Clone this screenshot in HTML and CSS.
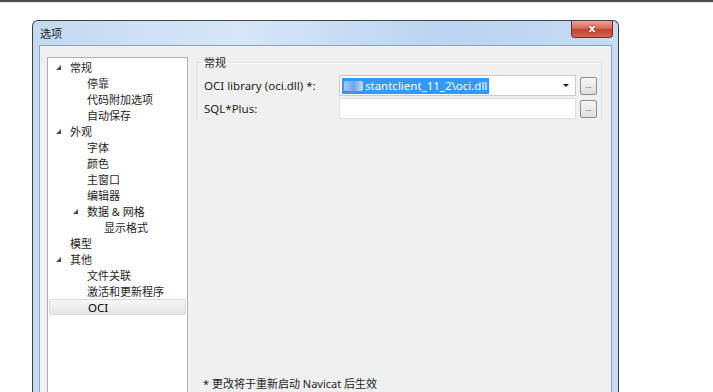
FILE: index.html
```html
<!DOCTYPE html>
<html lang="zh-CN">
<head>
    <meta charset="UTF-8">
    <meta name="viewport" content="width=device-width, initial-scale=1.0">
    <title>选项</title>
    <link rel="stylesheet" href="styles.css">
</head>
<body>

    <div class="topbar"></div>

    <div class="window">
        <!-- Title bar -->
        <div class="titlebar">
            <span class="title">选项</span>
            <button class="close">x</button>
        </div>

        <div class="client">
            <!-- Category tree -->
            <ul class="tree">
                <li class="node lvl0"><span class="twisty open"></span>常规</li>
                <li class="node lvl1"><span class="twisty"></span>停靠</li>
                <li class="node lvl1"><span class="twisty"></span>代码附加选项</li>
                <li class="node lvl1"><span class="twisty"></span>自动保存</li>
                <li class="node lvl0"><span class="twisty open"></span>外观</li>
                <li class="node lvl1"><span class="twisty"></span>字体</li>
                <li class="node lvl1"><span class="twisty"></span>颜色</li>
                <li class="node lvl1"><span class="twisty"></span>主窗口</li>
                <li class="node lvl1"><span class="twisty"></span>编辑器</li>
                <li class="node lvl1"><span class="twisty open"></span>数据 &amp; 网格</li>
                <li class="node lvl2"><span class="twisty"></span>显示格式</li>
                <li class="node lvl0"><span class="twisty"></span>模型</li>
                <li class="node lvl0"><span class="twisty open"></span>其他</li>
                <li class="node lvl1"><span class="twisty"></span>文件关联</li>
                <li class="node lvl1"><span class="twisty"></span>激活和更新程序</li>
                <li class="node lvl1 selected"><span class="twisty"></span>OCI</li>
            </ul>

            <!-- Settings page -->
            <div class="page">
                <fieldset class="group">
                    <legend>常规</legend>
                    <div class="field-row">
                        <label>OCI library (oci.dll) *:</label>
                        <div class="combo">
                            <span class="sel"><span class="blur"></span>stantclient_11_2\oci.dll</span>
                            <span class="arrow"></span>
                        </div>
                        <button class="browse">...</button>
                    </div>
                    <div class="field-row">
                        <label>SQL*Plus:</label>
                        <div class="input"></div>
                        <button class="browse">...</button>
                    </div>
                </fieldset>
                <p class="note">* 更改将于重新启动 Navicat 后生效</p>
            </div>
        </div>
    </div>

</body>
</html>
```

FILE: styles.css
```css
/* General Styles */
body {
    margin: 0;
    background-color: #fff;
    font-family: "Noto Sans", "Noto Sans CJK SC", sans-serif;
    font-size: 11px;
    color: #1e1e1e;
    overflow: hidden;
}

.topbar {
    height: 2px;
    background-color: #4a4a4a;
    border-bottom: 1px solid #ececec;
}

/* Window frame */
.window {
    box-sizing: border-box;
    width: 587px;
    height: 400px;
    margin: 17px 0 0 32px;
    padding: 0 6px;
    border: 1px solid #3d4248;
    border-bottom: none;
    border-radius: 6px 6px 0 0;
    background: linear-gradient(to right, #c3d9f1, #d6e6f7 35%, #bad4f1 70%, #c6dbf4);
    display: flex;
    flex-direction: column;
}

.titlebar {
    height: 24px;
    display: flex;
    justify-content: space-between;
    align-items: flex-start;
}

.title {
    margin-top: 4px;
    margin-left: 1px;
    color: #1a1a1a;
}

.close {
    width: 42px;
    height: 17px;
    margin-right: -1px;
    padding: 0;
    border: 1px solid #7b2a22;
    border-top: none;
    border-radius: 0 0 4px 4px;
    background: linear-gradient(#e9a596, #d76a56 45%, #c4412e 55%, #d2654f);
    color: #fff;
    font-family: "DejaVu Sans", sans-serif;
    font-weight: bold;
    font-size: 11px;
    line-height: 14px;
    text-shadow: 0 0 2px #6b1d14;
}

.client {
    flex: 1;
    display: flex;
    background-color: #f0f0f0;
    border: 1px solid #8ea3bd;
    border-bottom: none;
}

/* Tree */
.tree {
    box-sizing: border-box;
    width: 141px;
    flex-shrink: 0;
    margin: 11px 0 0 7px;
    padding: 1px 0 0;
    list-style: none;
    background-color: #fff;
    border: 1px solid #adb2b5;
}

.node {
    display: flex;
    align-items: center;
    height: 16px;
    padding-left: 5px;
}

.lvl1 {
    padding-left: 22px;
}

.lvl2 {
    padding-left: 39px;
}

.twisty {
    width: 17px;
    height: 16px;
    flex-shrink: 0;
    position: relative;
}

.twisty.open::before {
    content: "";
    position: absolute;
    left: 3px;
    top: 6px;
    width: 0;
    height: 0;
    border-left: 5px solid transparent;
    border-bottom: 5px solid #4d4d4d;
}

.selected {
    margin: 0 1px;
    padding-left: 21px;
    background: linear-gradient(#f7f7f7, #e6e6e6);
    border: 1px solid #d9d9d9;
    border-radius: 2px;
    height: 14px;
    color: #000;
    font-size: 11.5px;
}

/* Settings page */
.page {
    flex: 1;
    min-width: 0;
    display: flex;
    flex-direction: column;
    padding: 8px 9px 29px 9px;
}

.group {
    min-width: 0;
    margin: 0;
    padding: 5px 0 0 6px;
    border: 1px solid #d5dfe5;
    border-bottom: none;
    box-shadow: inset 1px 1px 0 #fff;
}

.group legend {
    padding: 0 2px;
    margin-left: -2px;
}

.field-row {
    display: flex;
    align-items: center;
    height: 21px;
    margin-bottom: 2px;
    font-size: 11.5px;
}

.field-row label {
    width: 135px;
    flex-shrink: 0;
}

.combo,
.input {
    box-sizing: border-box;
    width: 237px;
    flex-shrink: 0;
    height: 21px;
    background-color: #fff;
    border: 1px solid #dcdfe4;
}

.combo {
    display: flex;
    align-items: center;
    justify-content: space-between;
    padding: 0 6px 0 2px;
    border-color: #c6cad2;
}

.sel {
    display: flex;
    align-items: center;
    height: 16px;
    padding-right: 2px;
    background-color: #3399ff;
    color: #fff;
}

.blur {
    width: 19px;
    height: 10px;
    margin: 0 2px;
    background: linear-gradient(to right, #a9c8ee, #6aa9f0 50%, #c7dcf4);
    border-radius: 2px;
}

.arrow {
    width: 0;
    height: 0;
    border-left: 3px solid transparent;
    border-right: 3px solid transparent;
    border-top: 3px solid #1a1a1a;
}

.browse {
    box-sizing: border-box;
    width: 17px;
    height: 18px;
    flex-shrink: 0;
    margin-left: 4px;
    padding: 0;
    border: 1px solid #8c8c8c;
    border-radius: 2px;
    background: linear-gradient(#f6f6f6, #dedede);
    font-size: 8px;
    line-height: 10px;
    color: #333;
}

.note {
    margin: auto 0 0 6px;
}
```
